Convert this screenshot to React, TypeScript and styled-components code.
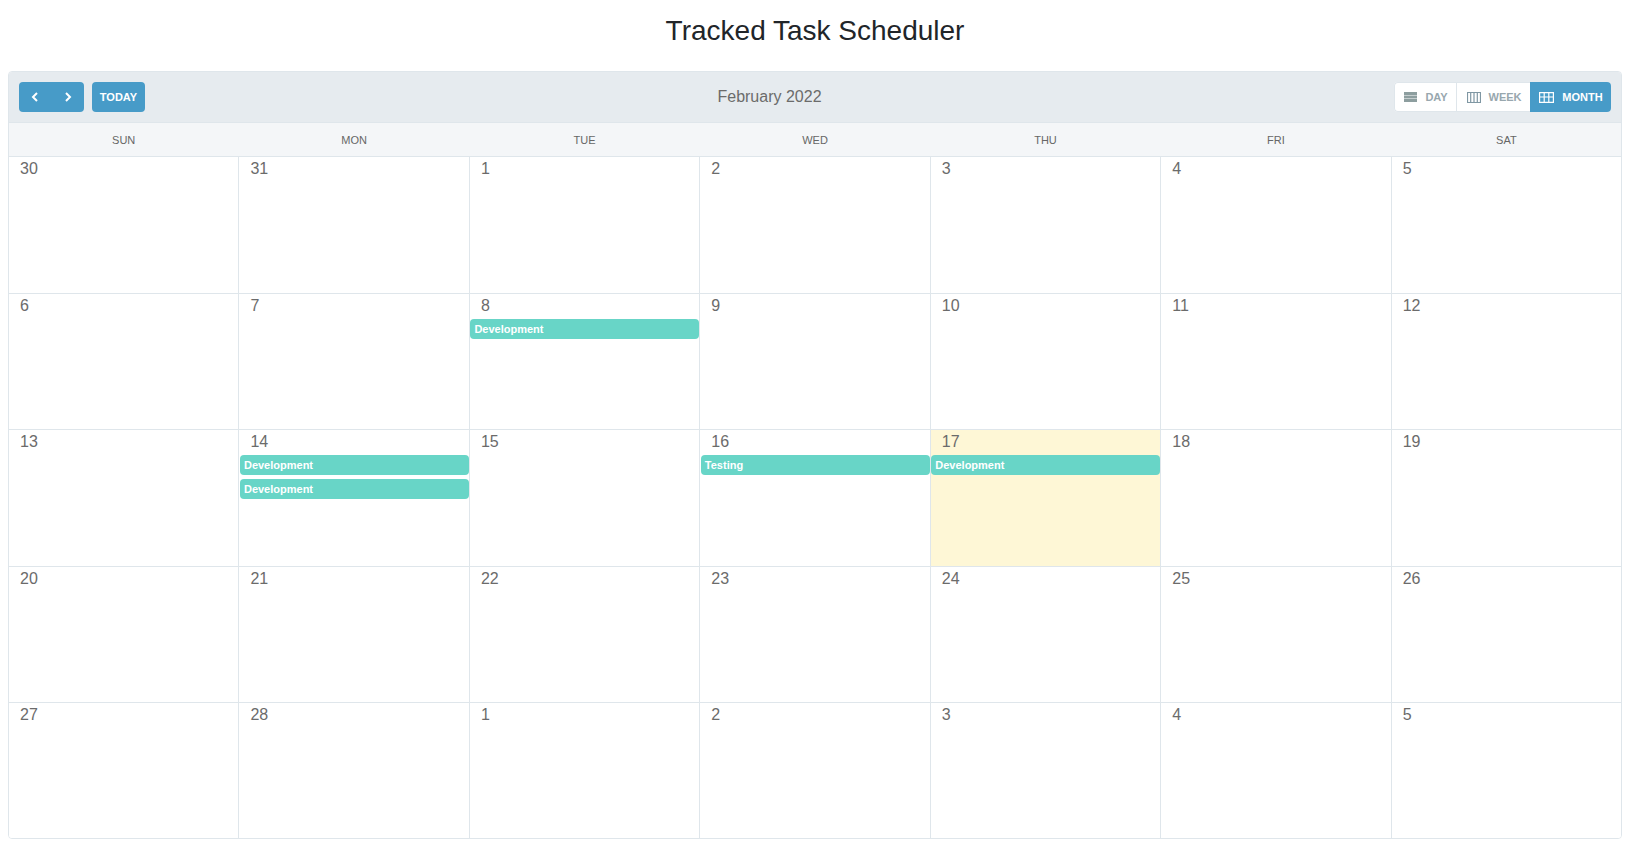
import React from 'react';
import styled, { createGlobalStyle } from 'styled-components';

const GlobalStyle = createGlobalStyle`
  html, body {
    margin: 0;
    padding: 0;
    background: #fff;
    font-family: 'Liberation Sans', Arial, sans-serif;
  }
`;

const Page = styled.div`
  width: 1632px;
  height: 845px;
  box-sizing: border-box;
  padding: 0 10px 0 8px;
  overflow: hidden;
`;

const Title = styled.h1`
  margin: 0;
  height: 71px;
  padding-top: 14px;
  box-sizing: border-box;
  font-size: 28px;
  line-height: 33px;
  font-weight: 400;
  text-align: center;
  color: #212529;
`;

const Panel = styled.div`
  height: 768px;
  box-sizing: border-box;
  border: 1px solid #dfe6eb;
  border-radius: 4px;
  overflow: hidden;
  display: flex;
  flex-direction: column;
`;

const Toolbar = styled.div`
  height: 51px;
  flex: none;
  box-sizing: border-box;
  padding: 10px;
  background: #e6ebef;
  border-bottom: 1px solid #dfe6eb;
  display: flex;
  justify-content: space-between;
  align-items: center;
`;

const ToolGroup = styled.div`
  display: flex;
  gap: 8px;
`;

const NavButtons = styled.div`
  width: 65px;
  height: 30px;
  border-radius: 4px;
  background: #479bc8;
  display: flex;
`;

const NavButton = styled.button`
  flex: 1;
  padding: 0;
  border: 0;
  background: transparent;
  color: #fff;
  display: flex;
  align-items: center;
  justify-content: center;
`;

const TodayButton = styled.button`
  width: 53px;
  height: 30px;
  padding: 0;
  border: 0;
  border-radius: 4px;
  background: #479bc8;
  color: #fff;
  font: 700 11px 'Liberation Sans', Arial, sans-serif;
`;

const MonthLabel = styled.div`
  font-size: 16px;
  color: #6b6b6b;
`;

const ViewSwitch = styled.div`
  height: 30px;
  display: flex;
  box-sizing: border-box;
  border-radius: 4px;
  background: #fff;
`;

const ViewButton = styled.button<{ $active?: boolean; $width: number }>`
  width: ${p => p.$width}px;
  height: 30px;
  box-sizing: border-box;
  padding: 0 0 0 1px;
  border: 0;
  border-style: solid;
  border-color: #dfe6eb;
  border-width: ${p => (p.$active ? '0' : '1px 0 1px 1px')};
  border-radius: ${p => (p.$active ? '0 4px 4px 0' : '0')};
  background: ${p => (p.$active ? '#479bc8' : '#fff')};
  color: ${p => (p.$active ? '#fff' : '#98a7ae')};
  font: 700 11px 'Liberation Sans', Arial, sans-serif;
  display: flex;
  align-items: center;
  justify-content: center;
  gap: 8px;
  &:first-child {
    border-radius: 4px 0 0 4px;
  }
`;

const DayHeader = styled.div`
  height: 33px;
  flex: none;
  width: 1613.15px;
  margin-left: -1px;
  display: grid;
  grid-template-columns: repeat(7, 1fr);
  background: #f4f6f8;
`;

const DayName = styled.div`
  padding-left: 1px;
  font-size: 11px;
  line-height: 34px;
  text-align: center;
  color: #666;
`;

const MonthGrid = styled.div`
  width: 1613.15px;
  margin-left: -1px;
  display: grid;
  grid-template-columns: repeat(7, 1fr);
  grid-template-rows: 137px 136px 137px 136px 136px;
`;

const Cell = styled.div<{ $today?: boolean }>`
  box-sizing: border-box;
  min-width: 0;
  padding-top: 3px;
  background: ${p => (p.$today ? '#fef7d6' : '#fff')};
  border-top: 1px solid #dfe6eb;
  border-left: 1px solid #dfe6eb;
`;

const DayNumber = styled.div`
  padding-left: 11px;
  height: 22px;
  font-size: 16px;
  line-height: 18px;
  color: #6b6b6b;
`;

const EventBar = styled.div`
  height: 20px;
  margin: 0 0 4px 0.5px;
  padding-left: 4px;
  border-radius: 4px;
  background: #68d5c7;
  color: #fff;
  font-size: 11px;
  font-weight: 700;
  line-height: 21px;
`;

const Chevron: React.FC<{ flip?: boolean }> = ({ flip }) => (
  <svg width="8" height="10" viewBox="0 0 8 10" fill="none">
    <path
      d={flip ? 'M2 1l4 4-4 4' : 'M6 1L2 5l4 4'}
      stroke="#fff"
      strokeWidth="2"
    />
  </svg>
);

const DayIcon: React.FC = () => (
  <svg width="13" height="10" viewBox="0 0 13 10" fill="#8d9e9f">
    <rect width="13" height="3" />
    <rect y="3.5" width="13" height="3" />
    <rect y="7" width="13" height="3" />
  </svg>
);

const WeekIcon: React.FC = () => (
  <svg width="14" height="11" viewBox="0 0 14 11" fill="none" stroke="#7f97a3" strokeWidth="1.2">
    <path d="M.5.5h13v10H.5zM3.7.5v10M7 .5v10M10.3.5v10" />
  </svg>
);

const MonthIcon: React.FC = () => (
  <svg width="15" height="11" viewBox="0 0 15 11" fill="none" stroke="currentColor" strokeWidth="1.2">
    <path d="M.6.6h13.8v9.8H.6zM5.2.6v9.8M9.8.6v9.8M.6 5h13.8" />
  </svg>
);

const dayNames = ['SUN', 'MON', 'TUE', 'WED', 'THU', 'FRI', 'SAT'];

const weeks = [
  [30, 31, 1, 2, 3, 4, 5],
  [6, 7, 8, 9, 10, 11, 12],
  [13, 14, 15, 16, 17, 18, 19],
  [20, 21, 22, 23, 24, 25, 26],
  [27, 28, 1, 2, 3, 4, 5],
];

// keyed by "row-col"
const events: Record<string, string[]> = {
  '1-2': ['Development'],
  '2-1': ['Development', 'Development'],
  '2-3': ['Testing'],
  '2-4': ['Development'],
};

const App: React.FC = () => {
  return (
    <Page>
      <GlobalStyle />
      <Title>Tracked Task Scheduler</Title>
      <Panel>
        <Toolbar>
          <ToolGroup>
            <NavButtons>
              <NavButton><Chevron /></NavButton>
              <NavButton><Chevron flip /></NavButton>
            </NavButtons>
            <TodayButton>TODAY</TodayButton>
          </ToolGroup>
          <MonthLabel>February 2022</MonthLabel>
          <ToolGroup>
            <ViewSwitch>
              <ViewButton $width={62}><DayIcon />DAY</ViewButton>
              <ViewButton $width={74}><WeekIcon />WEEK</ViewButton>
              <ViewButton $width={81} $active><MonthIcon />MONTH</ViewButton>
            </ViewSwitch>
          </ToolGroup>
        </Toolbar>
        <DayHeader>
          {dayNames.map(name => <DayName key={name}>{name}</DayName>)}
        </DayHeader>
        <MonthGrid>
          {weeks.map((week, row) =>
            week.map((day, col) => (
              <Cell key={`${row}-${col}`} $today={row === 2 && col === 4}>
                <DayNumber>{day}</DayNumber>
                {(events[`${row}-${col}`] || []).map((label, i) => (
                  <EventBar key={i}>{label}</EventBar>
                ))}
              </Cell>
            ))
          )}
        </MonthGrid>
      </Panel>
    </Page>
  );
};

export default App;
